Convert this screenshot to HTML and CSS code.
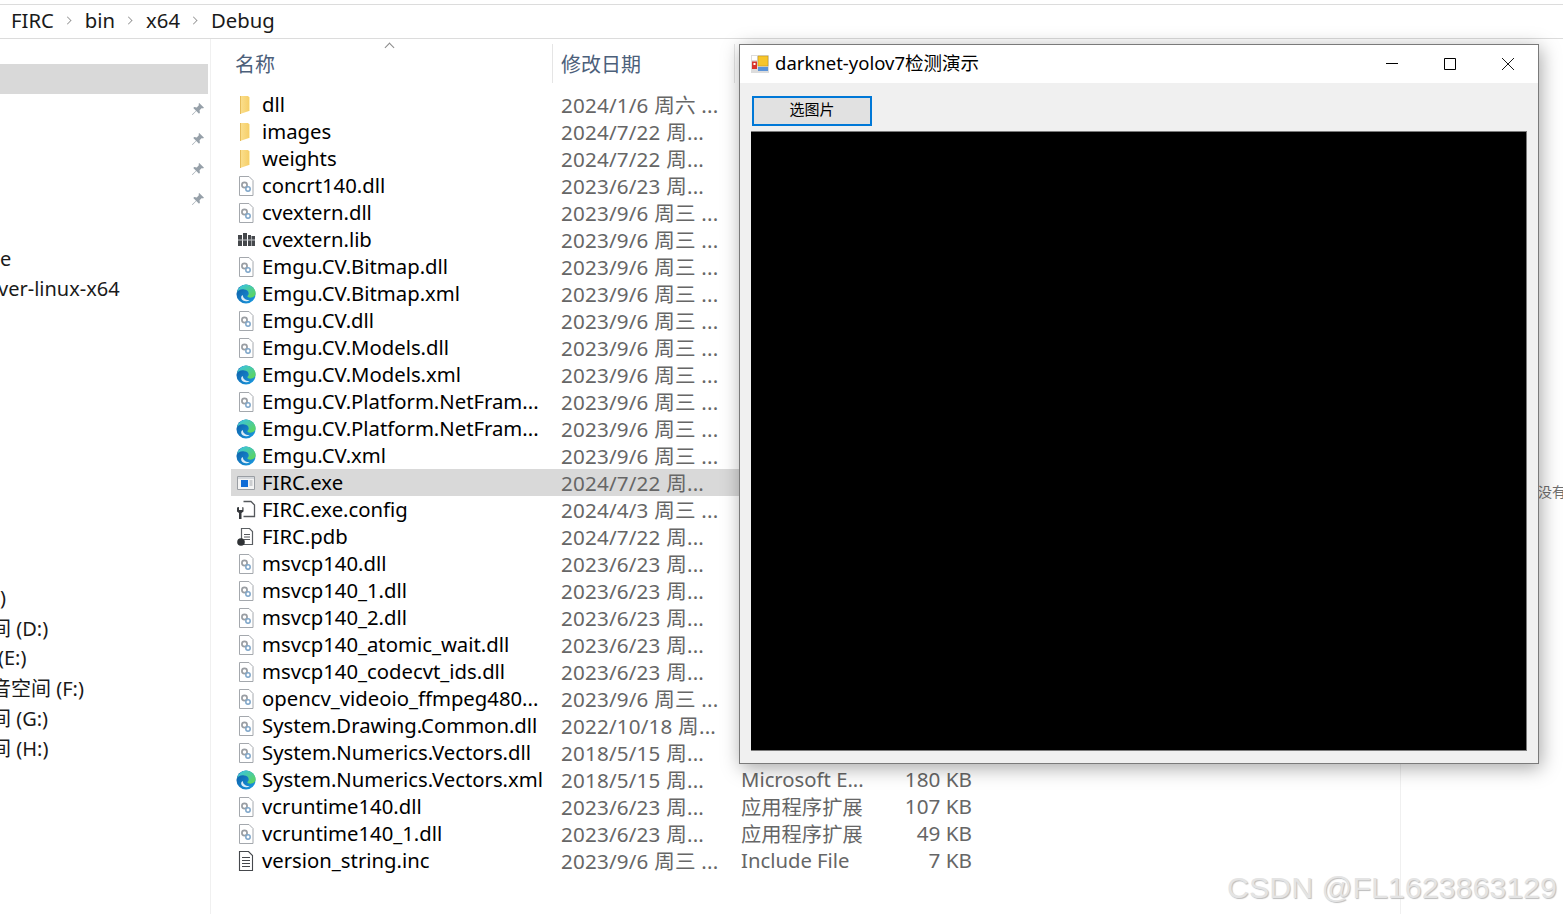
FILE: index.html
```html
<!DOCTYPE html>
<html lang="zh-CN">
<head>
  <meta charset="UTF-8">
  <meta name="viewport" content="width=device-width, initial-scale=1.0">
  <title>darknet-yolov7检测演示</title>
  <link rel="stylesheet" href="styles.css">
</head>
<body>

  <svg class="sprite" width="0" height="0">
    <defs>
      <linearGradient id="edgeBlue" x1="0" y1="0" x2="1" y2="1">
        <stop offset="0" stop-color="#0c59a4"/>
        <stop offset="1" stop-color="#1b9de2"/>
      </linearGradient>
      <linearGradient id="edgeGreen" x1="0" y1="0" x2="1" y2="1">
        <stop offset="0" stop-color="#35c1f1"/>
        <stop offset="1" stop-color="#62d84e"/>
      </linearGradient>
      <linearGradient id="folderFill" x1="0" y1="0" x2="1" y2="0">
        <stop offset="0" stop-color="#fbe08f"/>
        <stop offset="1" stop-color="#f6cf6a"/>
      </linearGradient>
      <symbol id="i-folder" viewBox="0 0 20 20">
        <path d="M4 1h8l1 1v14l-9 3z" fill="url(#folderFill)"/>
        <path d="M4 1h1v18H4z" fill="#e6bc5a"/>
        <path d="M13 2h1v14h-1z" fill="#fdeeb8"/>
      </symbol>
      <symbol id="i-dll" viewBox="0 0 20 20">
        <path d="M3.500 .5h9.500l4 4v15H3.500z" fill="#fff" stroke="#a4a8ad"/>
        <circle cx="8.500" cy="9" r="2.600" fill="none" stroke="#9a9ea3" stroke-width="1.700"/>
        <circle cx="12" cy="13" r="2.200" fill="none" stroke="#7fa6c9" stroke-width="1.500"/>
      </symbol>
      <symbol id="i-lib" viewBox="0 0 20 20">
        <path d="M2 5h4v11H2zM7 3h4v13H7zM12 5h3v11h-3zM15.500 6H19v10h-3.500z" fill="#45484c"/>
        <path d="M2 9.500h17v1H2z" fill="#c9cbce"/>
      </symbol>
      <symbol id="i-edge" viewBox="0 0 22 22">
        <circle cx="11" cy="11" r="10.500" fill="url(#edgeBlue)"/>
        <path d="M1 9.500C2.500 3.500 7 .5 11 .5c5.500 0 10.500 4.500 10.500 9.500 0 3.500-3 5-5.500 5-2 0-3.500-.7-3.500-1.500 0-.6 1.500-1 1.500-3 0-3-2.500-4.500-5-4.500C5 5.500 2 7 1 9.500z" fill="url(#edgeGreen)"/>
        <path d="M7.500 12c0 3.500 3.500 6 7.500 5.500-2 1.800-6.500 2-8.500-.5-1.400-1.700-1-4.500 1-5z" fill="#fff" opacity=".85"/>
      </symbol>
      <symbol id="i-exe" viewBox="0 0 20 20">
        <path d="M1.500 3.500h17v13h-17z" fill="#f4f4f4" stroke="#9a9ea3"/>
        <path d="M2 4h16v2H2z" fill="#d5d8dc"/>
        <path d="M5 7h7v7H5z" fill="#0f6cd6"/>
        <path d="M13.500 8h3M13.500 10h3M13.500 12h3" stroke="#a4a8ad"/>
      </symbol>
      <symbol id="i-config" viewBox="0 0 20 20">
        <path d="M7.500 1.500h7.500l3.500 3.500v11.500h-11" fill="#fff" stroke="#55585c" stroke-width="1.300"/>
        <path d="M1 7.500v4l2 1.500v6h2.500v-6l2-1.500v-4L6.300 7v3H3V7z" fill="#35383c"/>
      </symbol>
      <symbol id="i-pdb" viewBox="0 0 20 20">
        <path d="M5.500 1.500h8l3 3v13h-11z" fill="#fff" stroke="#5a5e62" stroke-width="1.200"/>
        <path d="M8 7.500h6M8 10h6M8 12.500h6" stroke="#55585c"/>
        <circle cx="5" cy="15" r="3.800" fill="#2f3235"/>
      </symbol>
      <symbol id="i-text" viewBox="0 0 20 20">
        <path d="M3.500 .5h9l4 4v15h-13z" fill="#fff" stroke="#45484c" stroke-width="1.100"/>
        <path d="M6 6.500h8M6 9.500h8M6 12.500h8M6 15.500h8" stroke="#45484c"/>
      </symbol>
      <symbol id="i-pin" viewBox="0 0 14 14">
        <path d="M8.200 1 13 5.800l-1.100.6-1-.5-2.300 2.300.3 2.600-.9.900-2.700-2.700L1.500 13 1 12.500l4-3.800L2.300 6l.9-.9 2.600.3L8 3.100l-.5-1z" fill="#96a0a9"/>
      </symbol>
    </defs>
  </svg>

  <div class="address-bar">
    <span>FIRC</span><span class="crumb-sep"></span>
    <span>bin</span><span class="crumb-sep"></span>
    <span>x64</span><span class="crumb-sep"></span>
    <span>Debug</span>
  </div>

  <div class="explorer">
    <nav class="nav-pane">
      <div class="nav-row nav-row-active"></div>
      <div class="nav-row"><svg class="pin"><use href="#i-pin"/></svg></div>
      <div class="nav-row"><svg class="pin"><use href="#i-pin"/></svg></div>
      <div class="nav-row"><svg class="pin"><use href="#i-pin"/></svg></div>
      <div class="nav-row"><svg class="pin"><use href="#i-pin"/></svg></div>
      <div class="nav-row"></div>
      <div class="nav-row"><span class="nav-text">e</span></div>
      <div class="nav-row"><span class="nav-text nav-cut">ver-linux-x64</span></div>
      <div class="nav-gap"></div>
      <div class="nav-row"><span class="nav-text">)</span></div>
      <div class="nav-row"><span class="nav-text nav-cut-cjk">间 (D:)</span></div>
      <div class="nav-row"><span class="nav-text nav-cut">(E:)</span></div>
      <div class="nav-row"><span class="nav-text nav-cut-cjk">音空间 (F:)</span></div>
      <div class="nav-row"><span class="nav-text nav-cut-cjk">间 (G:)</span></div>
      <div class="nav-row"><span class="nav-text nav-cut-cjk">间 (H:)</span></div>
    </nav>

    <main class="file-pane">
      <div class="file-header">
        <div class="head-name">名称<span class="sort-arrow"></span></div>
        <div class="head-date">修改日期</div>
      </div>

      <div class="file-list">
        <div class="file-row"><svg class="ficon"><use href="#i-folder"/></svg><span class="fname">dll</span><span class="fdate">2024/1/6 周六 ...</span></div>
        <div class="file-row"><svg class="ficon"><use href="#i-folder"/></svg><span class="fname">images</span><span class="fdate">2024/7/22 周...</span></div>
        <div class="file-row"><svg class="ficon"><use href="#i-folder"/></svg><span class="fname">weights</span><span class="fdate">2024/7/22 周...</span></div>
        <div class="file-row"><svg class="ficon"><use href="#i-dll"/></svg><span class="fname">concrt140.dll</span><span class="fdate">2023/6/23 周...</span></div>
        <div class="file-row"><svg class="ficon"><use href="#i-dll"/></svg><span class="fname">cvextern.dll</span><span class="fdate">2023/9/6 周三 ...</span></div>
        <div class="file-row"><svg class="ficon"><use href="#i-lib"/></svg><span class="fname">cvextern.lib</span><span class="fdate">2023/9/6 周三 ...</span></div>
        <div class="file-row"><svg class="ficon"><use href="#i-dll"/></svg><span class="fname">Emgu.CV.Bitmap.dll</span><span class="fdate">2023/9/6 周三 ...</span></div>
        <div class="file-row"><svg class="ficon"><use href="#i-edge"/></svg><span class="fname">Emgu.CV.Bitmap.xml</span><span class="fdate">2023/9/6 周三 ...</span></div>
        <div class="file-row"><svg class="ficon"><use href="#i-dll"/></svg><span class="fname">Emgu.CV.dll</span><span class="fdate">2023/9/6 周三 ...</span></div>
        <div class="file-row"><svg class="ficon"><use href="#i-dll"/></svg><span class="fname">Emgu.CV.Models.dll</span><span class="fdate">2023/9/6 周三 ...</span></div>
        <div class="file-row"><svg class="ficon"><use href="#i-edge"/></svg><span class="fname">Emgu.CV.Models.xml</span><span class="fdate">2023/9/6 周三 ...</span></div>
        <div class="file-row"><svg class="ficon"><use href="#i-dll"/></svg><span class="fname">Emgu.CV.Platform.NetFram...</span><span class="fdate">2023/9/6 周三 ...</span></div>
        <div class="file-row"><svg class="ficon"><use href="#i-edge"/></svg><span class="fname">Emgu.CV.Platform.NetFram...</span><span class="fdate">2023/9/6 周三 ...</span></div>
        <div class="file-row"><svg class="ficon"><use href="#i-edge"/></svg><span class="fname">Emgu.CV.xml</span><span class="fdate">2023/9/6 周三 ...</span></div>
        <div class="file-row file-row-selected"><svg class="ficon"><use href="#i-exe"/></svg><span class="fname">FIRC.exe</span><span class="fdate">2024/7/22 周...</span></div>
        <div class="file-row"><svg class="ficon"><use href="#i-config"/></svg><span class="fname">FIRC.exe.config</span><span class="fdate">2024/4/3 周三 ...</span></div>
        <div class="file-row"><svg class="ficon"><use href="#i-pdb"/></svg><span class="fname">FIRC.pdb</span><span class="fdate">2024/7/22 周...</span></div>
        <div class="file-row"><svg class="ficon"><use href="#i-dll"/></svg><span class="fname">msvcp140.dll</span><span class="fdate">2023/6/23 周...</span></div>
        <div class="file-row"><svg class="ficon"><use href="#i-dll"/></svg><span class="fname">msvcp140_1.dll</span><span class="fdate">2023/6/23 周...</span></div>
        <div class="file-row"><svg class="ficon"><use href="#i-dll"/></svg><span class="fname">msvcp140_2.dll</span><span class="fdate">2023/6/23 周...</span></div>
        <div class="file-row"><svg class="ficon"><use href="#i-dll"/></svg><span class="fname">msvcp140_atomic_wait.dll</span><span class="fdate">2023/6/23 周...</span></div>
        <div class="file-row"><svg class="ficon"><use href="#i-dll"/></svg><span class="fname">msvcp140_codecvt_ids.dll</span><span class="fdate">2023/6/23 周...</span></div>
        <div class="file-row"><svg class="ficon"><use href="#i-dll"/></svg><span class="fname">opencv_videoio_ffmpeg480...</span><span class="fdate">2023/9/6 周三 ...</span></div>
        <div class="file-row"><svg class="ficon"><use href="#i-dll"/></svg><span class="fname">System.Drawing.Common.dll</span><span class="fdate">2022/10/18 周...</span></div>
        <div class="file-row"><svg class="ficon"><use href="#i-dll"/></svg><span class="fname">System.Numerics.Vectors.dll</span><span class="fdate">2018/5/15 周...</span></div>
        <div class="file-row"><svg class="ficon"><use href="#i-edge"/></svg><span class="fname">System.Numerics.Vectors.xml</span><span class="fdate">2018/5/15 周...</span><span class="ftype">Microsoft E...</span><span class="fsize">180 KB</span></div>
        <div class="file-row"><svg class="ficon"><use href="#i-dll"/></svg><span class="fname">vcruntime140.dll</span><span class="fdate">2023/6/23 周...</span><span class="ftype">应用程序扩展</span><span class="fsize">107 KB</span></div>
        <div class="file-row"><svg class="ficon"><use href="#i-dll"/></svg><span class="fname">vcruntime140_1.dll</span><span class="fdate">2023/6/23 周...</span><span class="ftype">应用程序扩展</span><span class="fsize">49 KB</span></div>
        <div class="file-row"><svg class="ficon"><use href="#i-text"/></svg><span class="fname">version_string.inc</span><span class="fdate">2023/9/6 周三 ...</span><span class="ftype">Include File</span><span class="fsize">7 KB</span></div>
      </div>
    </main>
  </div>

  <div class="col-line"></div>
  <div class="behind-text">没有</div>

  <section class="app-window">
    <header class="title-bar">
      <svg class="app-icon" viewBox="0 0 18 18">
        <path d="M0 0h18v18H0z" fill="#dcdcdc"/>
        <path d="M1 1h5v4H1z" fill="#fff"/>
        <path d="M7 1h10v10H7z" fill="#f7c52b" stroke="#b98f10" stroke-width=".5"/>
        <path d="M1 6.500h5V14H1z" fill="#d8342c"/>
        <path d="M2.500 8h2v2h-2z" fill="#fff"/>
        <path d="M7 12h10v4H7z" fill="#5b93d8"/>
      </svg>
      <span class="app-title">darknet-yolov7检测演示</span>
      <div class="win-controls">
        <svg class="win-btn" viewBox="0 0 12 12"><path d="M0 5.500h12" stroke="#000"/></svg>
        <svg class="win-btn" viewBox="0 0 12 12"><path d="M.5.500h11v11H.5z" fill="none" stroke="#000"/></svg>
        <svg class="win-btn" viewBox="0 0 12 12"><path d="M0 0l12 12M12 0 0 12" stroke="#000" stroke-width=".9"/></svg>
      </div>
    </header>
    <div class="app-body">
      <button class="pick-btn" type="button">选图片</button>
      <div class="picture-box"></div>
    </div>
  </section>

  <div class="watermark">CSDN @FL1623863129</div>

</body>
</html>
```

FILE: styles.css
```css
html, body {
  margin: 0;
  height: 100%;
}

body {
  position: relative;
  width: 1563px;
  height: 914px;
  overflow: hidden;
  background: #fff;
  font-family: "Noto Sans", "Noto Sans CJK SC", sans-serif;
  color: #000;
}

.sprite {
  position: absolute;
}

/* barra de direcciones */
.address-bar {
  box-sizing: border-box;
  height: 35px;
  margin-top: 4px;
  border-top: 1px solid #dcdcdc;
  border-bottom: 1px solid #dcdcdc;
  padding-left: 11px;
  padding-bottom: 4px;
  display: flex;
  align-items: center;
  font-size: 20.300px;
  color: #1a1a1a;
}

.crumb-sep {
  width: 6px;
  height: 6px;
  margin: 2px 14px 0 10px;
  border-top: 1.5px solid #8a8a8a;
  border-right: 1.5px solid #8a8a8a;
  transform: rotate(45deg) scale(.8);
}

.explorer {
  display: flex;
  height: 875px;
}

.nav-pane {
  box-sizing: border-box;
  width: 211px;
  padding-top: 25px;
  border-right: 1px solid #f0f0f0;
  font-size: 20px;
  color: #1a1a1a;
  white-space: nowrap;
  overflow: hidden;
}

.nav-row {
  box-sizing: border-box;
  width: 208px;
  height: 30px;
  display: flex;
  align-items: center;
  justify-content: space-between;
}

.nav-row-active {
  background: #d9d9d9;
}

.nav-gap {
  height: 279px;
}

.nav-text {
  margin-top: -2px;
}

.nav-cut {
  margin-left: -2px;
}

/* el panel lateral esta desplazado y corta la primera letra */
.nav-cut-cjk {
  margin-left: -9px;
}

.pin {
  width: 14px;
  height: 14px;
  margin-left: auto;
  margin-right: 3px;
}

.file-pane {
  flex: 1;
  padding-left: 20px;
  font-size: 20.300px;
}

.file-header {
  display: flex;
  height: 52px;
  color: #4c607a;
  font-size: 20px;
}

.head-name {
  position: relative;
  box-sizing: border-box;
  width: 322px;
  height: 39px;
  margin-top: 5px;
  padding: 3px 0 0 4px;
  border-right: 1px solid #e5e5e5;
  line-height: 35px;
}

.head-date {
  box-sizing: border-box;
  width: 182px;
  height: 39px;
  margin-top: 5px;
  padding: 3px 0 0 8px;
  border-right: 1px solid #e5e5e5;
  line-height: 35px;
}

.sort-arrow {
  position: absolute;
  left: 155px;
  top: 0;
  width: 6px;
  height: 6px;
  border-top: 1px solid #8a8a8a;
  border-left: 1px solid #8a8a8a;
  transform: rotate(45deg);
}

.file-row {
  display: flex;
  align-items: center;
  height: 27px;
  width: 900px;
  white-space: nowrap;
}

.file-row span {
  margin-top: -2px;
}

.file-row-selected {
  background: #d9d9d9;
}

.ficon {
  width: 20px;
  height: 20px;
  margin-left: 5px;
  margin-right: 6px;
  flex: none;
}

.fname {
  width: 299px;
}

.fdate {
  width: 180px;
  color: #666;
  font-size: 20.600px;
  letter-spacing: .2px;
}

.ftype {
  width: 120px;
  color: #666;
  font-size: 20.300px;
}

.fsize {
  width: 111px;
  text-align: right;
  color: #666;
  font-size: 20.700px;
}

.col-line {
  position: absolute;
  left: 1400px;
  top: 764px;
  width: 1px;
  height: 150px;
  background: #f0f0f0;
}

.behind-text {
  position: absolute;
  left: 1538px;
  top: 481px;
  font-size: 14px;
  color: #6f6f6f;
  white-space: nowrap;
}

/* ventana flotante */
.app-window {
  position: absolute;
  left: 739px;
  top: 44px;
  box-sizing: border-box;
  width: 800px;
  height: 720px;
  border: 1px solid #7a7a7a;
  background: #f0f0f0;
  box-shadow: 2px 4px 18px rgba(0, 0, 0, 0.35);
  display: flex;
  flex-direction: column;
}

.title-bar {
  height: 38px;
  background: #fff;
  display: flex;
  align-items: center;
  padding-left: 11px;
  flex: none;
}

.app-icon {
  width: 18px;
  height: 18px;
  margin-right: 6px;
}

.app-title {
  font-size: 18.500px;
  margin-top: -5px;
  color: #000;
}

.win-controls {
  margin-left: auto;
  display: flex;
  gap: 46px;
  padding-right: 24px;
}

.win-btn {
  width: 12px;
  height: 12px;
}

.app-body {
  padding: 13px 11px 0 11px;
}

.pick-btn {
  display: block;
  box-sizing: border-box;
  width: 120px;
  height: 30px;
  margin-left: 1px;
  border: 2px solid #0078d7;
  background: #e1e1e1;
  font-family: "Noto Sans CJK SC", sans-serif;
  font-size: 15px;
  line-height: 20px;
  color: #000;
  padding: 0 0 4px 0;
}

.picture-box {
  box-sizing: border-box;
  width: 776px;
  height: 620px;
  margin-top: 5px;
  background: #000;
  border-top: 1px solid #7a7a7a;
  border-right: 1px solid #7a7a7a;
  border-bottom: 1px solid #7a7a7a;
}

.watermark {
  position: absolute;
  left: 1227px;
  top: 869px;
  font-family: "Liberation Sans", sans-serif;
  font-size: 30.400px;
  line-height: 36px;
  color: #e4e4e4;
  text-shadow: 1px 1px 1px #bdbdbd;
  white-space: nowrap;
}
```
